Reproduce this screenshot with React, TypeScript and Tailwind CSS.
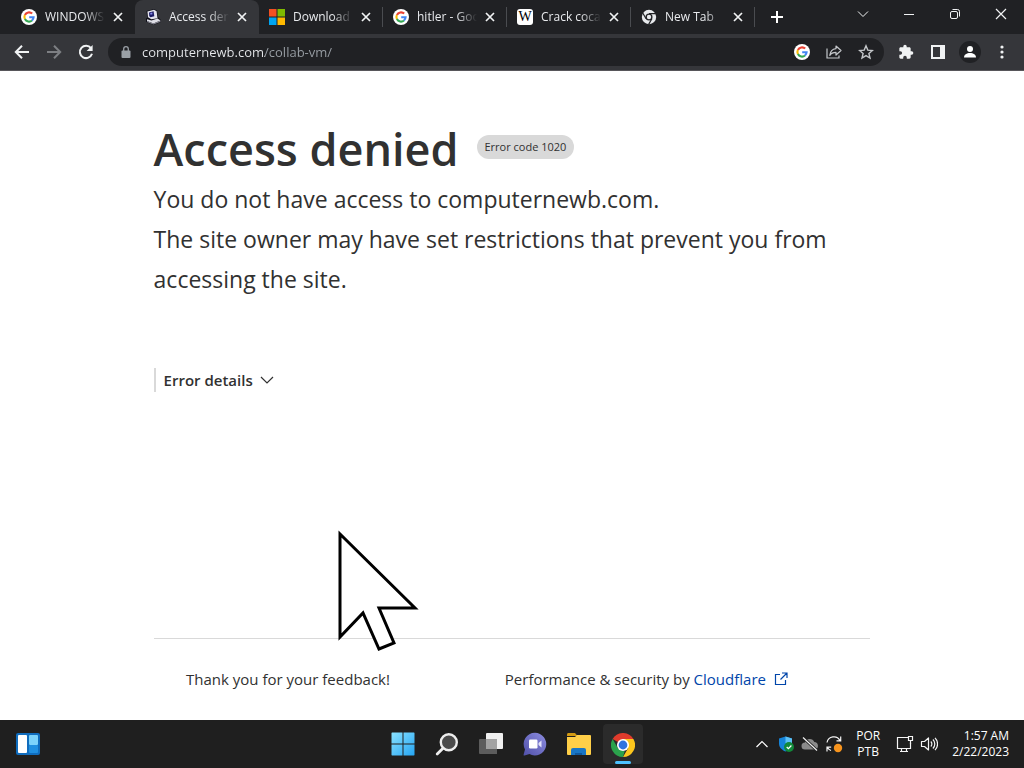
import type { ReactNode } from "react";

const GoogleIcon = () => (
  <svg viewBox="0 0 16 16" className="size-4 shrink-0" aria-hidden="true">
    <circle cx="8" cy="8" r="8" fill="#fff" />
    <g fill="none" strokeWidth="2.1">
      <path d="M11.2 4.6A4.6 4.6 0 0 0 3.9 6" stroke="#ea4335" />
      <path d="M3.9 6a4.6 4.6 0 0 0 0 4.1" stroke="#fbbc05" />
      <path d="M3.9 10.1a4.6 4.6 0 0 0 7.1 1.4" stroke="#34a853" />
      <path d="M11 11.5a4.6 4.6 0 0 0 1.6-3.2H8.2" stroke="#4285f4" />
    </g>
  </svg>
);

const ComputerIcon = () => (
  <svg viewBox="0 0 16 16" className="size-4 shrink-0" aria-hidden="true">
    <path d="M1.5 2L9 0l3 1.6 1 6.4 3 3v2L8.5 16 1 12.800V9.500L2.800 8.500 2 7z" fill="#101018" />
    <path d="M2.400 2.600L9 .8l2.600 1.400.9 7L6.400 10.200 3 8.200z" fill="#e4e4ee" />
    <path d="M4 3.400l4.600-1.100.7 5-3.800.9L4.300 7.300z" fill="#1c1c66" />
    <path d="M5.200 4l2-.5.3 1.800-2 .4z" fill="#8a8aec" />
    <path d="M2 10.200l4.500 1.200L12.500 9.400l3 2-7 3L2 12z" fill="#dedee6" />
    <path d="M2 12l6.500 2.400 7-3v1.300L8.500 15.500 2 13z" fill="#8d8d98" />
  </svg>
);

const MicrosoftIcon = () => (
  <svg viewBox="0 0 16 16" className="size-4 shrink-0" aria-hidden="true">
    <path d="M0 0h7.5v7.5H0z" fill="#f25022" />
    <path d="M8.5 0H16v7.5H8.5z" fill="#7fba00" />
    <path d="M0 8.5h7.5V16H0z" fill="#00a4ef" />
    <path d="M8.5 8.5H16V16H8.5z" fill="#ffb900" />
  </svg>
);

const WikiIcon = () => (
  <span
    aria-hidden="true"
    className="flex size-4 shrink-0 items-center justify-center rounded-[3px] bg-white font-['Liberation_Serif',serif] text-sm leading-none text-black"
  >
    W
  </span>
);

const ChromeMonoIcon = () => (
  <svg viewBox="0 0 16 16" className="size-4 shrink-0" aria-hidden="true">
    <circle cx="8" cy="8" r="7.2" fill="#e8eaed" />
    <circle cx="8" cy="8" r="3.5" fill="#202124" />
    <g stroke="#202124" strokeWidth="1.2">
      <path d="M8 4.6h7M5.1 9.8L1.600 3.800M10.900 9.8L7.500 15.600" />
    </g>
    <circle cx="8" cy="8" r="2.2" fill="#e8eaed" />
  </svg>
);

const ChromeIcon = () => (
  <svg viewBox="0 0 24 24" className="size-6" aria-hidden="true">
    <path d="M12 12L1.6 6a12 12 0 0 1 20.8 0z" fill="#df3b2c" />
    <path d="M12 6h10.4a12 12 0 0 1-10.4 18l5.2-9z" fill="#fcc61d" />
    <path d="M1.6 6l5.2 9 5.2 3h1.700L12 24A12 12 0 0 1 1.6 6z" fill="#2ba24c" />
    <circle cx="12" cy="12" r="6" fill="#fff" />
    <circle cx="12" cy="12" r="4.4" fill="#2f73e0" />
  </svg>
);

type Tab = { title: string; icon: ReactNode; active?: boolean };

const tabs: Tab[] = [
  { title: "WINDOWS", icon: <GoogleIcon /> },
  { title: "Access denied", icon: <ComputerIcon />, active: true },
  { title: "Download W", icon: <MicrosoftIcon /> },
  { title: "hitler - Google", icon: <GoogleIcon /> },
  { title: "Crack cocaine", icon: <WikiIcon /> },
  { title: "New Tab", icon: <ChromeMonoIcon /> },
];

function TabItem({ title, icon, active, divided }: Tab & { divided: boolean }) {
  return (
    <div
      className={
        active
          ? "flex w-[124px] items-center rounded-t-lg bg-[#35363a] pl-2.5"
          : "flex w-[124px] items-center pl-2.5"
      }
    >
      <button type="button" className="flex min-w-0 flex-1 items-center gap-2 text-left">
        {icon}
        <span className="w-[60px] overflow-hidden text-xs whitespace-nowrap text-[#e8eaed] [mask-image:linear-gradient(to_right,#000_66%,transparent)]">
          {title}
        </span>
      </button>
      <button type="button" aria-label="Close tab" className="mr-2 flex size-4 shrink-0 items-center justify-center">
        <svg viewBox="0 0 16 16" className="size-4" stroke="#f1f3f4" strokeWidth="1.7" aria-hidden="true">
          <path d="M4 4l8 8M12 4l-8 8" />
        </svg>
      </button>
      <span className={divided ? "h-5 w-px bg-[#4a4c50]" : "h-5 w-px"} />
    </div>
  );
}

function WindowButton({ label, children }: { label: string; children: ReactNode }) {
  return (
    <button type="button" aria-label={label} className="flex h-7 w-[46px] items-center justify-center">
      <svg viewBox="0 0 12 12" className="size-3" fill="none" stroke="#f1f3f4" strokeWidth="1" aria-hidden="true">
        {children}
      </svg>
    </button>
  );
}

function TabStrip() {
  return (
    <header className="flex h-[34px] bg-[#202124] pl-[11px]">
      <nav aria-label="Tabs" className="flex">
        {tabs.map((tab, i) => (
          <TabItem key={tab.title} {...tab} divided={i > 1} />
        ))}
      </nav>
      <button type="button" aria-label="New tab" className="flex w-11 items-center justify-center">
        <svg viewBox="0 0 12 12" className="size-3" stroke="#fff" strokeWidth="2" aria-hidden="true">
          <path d="M6 0v12M0 6h12" />
        </svg>
      </button>
      <div className="ml-auto flex">
        <WindowButton label="Search tabs">
          <path d="M1 3.5l5 5 5-5" />
        </WindowButton>
        <WindowButton label="Minimize">
          <path d="M1 6.5h10" />
        </WindowButton>
        <WindowButton label="Restore">
          <rect x="1.5" y="3.5" width="7" height="7" rx="1.5" />
          <path d="M3.5 1.5h5a2 2 0 0 1 2 2v5" />
        </WindowButton>
        <WindowButton label="Close">
          <path d="M1 1l10 10M11 1L1 11" strokeWidth="1.2" />
        </WindowButton>
      </div>
    </header>
  );
}

function ToolButton({ label, children }: { label: string; children: ReactNode }) {
  return (
    <button type="button" aria-label={label} className="flex size-8 items-center justify-center">
      {children}
    </button>
  );
}

function Toolbar() {
  return (
    <div className="flex h-[37px] items-center border-b border-[#57565a] bg-[#35363a] px-1.5">
      <ToolButton label="Back">
        <svg viewBox="0 0 16 16" className="size-4" fill="none" stroke="#f1f3f4" strokeWidth="2" aria-hidden="true">
          <path d="M15 8H2M8 1.8L1.8 8 8 14.2" />
        </svg>
      </ToolButton>
      <ToolButton label="Forward">
        <svg viewBox="0 0 16 16" className="size-4" fill="none" stroke="#7d7f83" strokeWidth="2" aria-hidden="true">
          <path d="M1 8h13M8 1.8L14.2 8 8 14.2" />
        </svg>
      </ToolButton>
      <ToolButton label="Reload">
        <svg viewBox="0 0 16 16" className="size-4" fill="none" stroke="#f1f3f4" strokeWidth="2" aria-hidden="true">
          <path d="M13 4.1A6.2 6.2 0 1 0 14 9.8" />
          <path d="M14.6 1v6h-6z" fill="#f1f3f4" stroke="none" />
        </svg>
      </ToolButton>
      <div className="ml-1.5 flex h-7 flex-1 items-center rounded-full bg-[#202124] pr-0.5 pl-3">
        <svg viewBox="0 0 12 12" className="size-3 shrink-0" aria-hidden="true">
          <rect x="1.5" y="4.5" width="9" height="7.5" rx="1" fill="#9aa0a6" />
          <path d="M3.7 5V3a2.3 2.3 0 0 1 4.6 0v2" fill="none" stroke="#9aa0a6" strokeWidth="1.3" />
        </svg>
        <input
          aria-label="Address"
          defaultValue="computernewb.com/collab-vm/"
          className="ml-2.5 min-w-0 flex-1 bg-[linear-gradient(to_right,#e8eaed_123px,#9aa0a6_123px)] bg-clip-text text-[13px] leading-5 text-transparent outline-none"
        />
        <ToolButton label="Search with Google">
          <GoogleIcon />
        </ToolButton>
        <ToolButton label="Share">
          <svg viewBox="0 0 16 16" className="size-4" fill="none" stroke="#c4c7ca" strokeWidth="1.2" aria-hidden="true">
            <path d="M1 4.5V14h12v-2.5" />
            <path d="M10 2l5 4.5-5 4.5V8.4C7 8.4 5 9.4 3.8 11.4 4.2 7.6 6.4 5 10 4.6z" strokeLinejoin="round" />
          </svg>
        </ToolButton>
        <ToolButton label="Bookmark">
          <svg viewBox="0 0 16 16" className="size-4" fill="none" stroke="#c4c7ca" strokeWidth="1.4" aria-hidden="true">
            <path d="M8 1.8l1.8 4.3 4.6.4-3.5 3 1.1 4.5L8 11.6 4 14l1.1-4.5-3.5-3 4.6-.4z" />
          </svg>
        </ToolButton>
      </div>
      <div className="ml-1.5 flex">
        <ToolButton label="Extensions">
          <svg viewBox="0 0 24 24" className="size-4" fill="#f1f3f4" aria-hidden="true">
            <path d="M20.5 11H19V7c0-1.1-.9-2-2-2h-4V3.5a2.5 2.5 0 0 0-5 0V5H4c-1.1 0-2 .9-2 2v3.8h1.5a2.7 2.7 0 0 1 0 5.4H2V20c0 1.1.9 2 2 2h3.8v-1.5a2.7 2.7 0 0 1 5.4 0V22H17c1.1 0 2-.9 2-2v-4h1.5a2.5 2.5 0 0 0 0-5z" />
          </svg>
        </ToolButton>
        <ToolButton label="Side panel">
          <svg viewBox="0 0 16 16" className="size-4" aria-hidden="true">
            <path d="M1 1h14v14H1zM3 3v10h7V3z" fill="#f1f3f4" fillRule="evenodd" />
          </svg>
        </ToolButton>
        <ToolButton label="Profile">
          <svg viewBox="0 0 22 22" className="size-[22px]" aria-hidden="true">
            <circle cx="11" cy="11" r="11" fill="#202124" />
            <circle cx="11" cy="8" r="3" fill="#fff" />
            <path d="M5 16.5c0-3 2.7-4.5 6-4.5s6 1.5 6 4.5z" fill="#fff" />
          </svg>
        </ToolButton>
        <ToolButton label="Menu">
          <svg viewBox="0 0 16 16" className="size-4" fill="#f1f3f4" aria-hidden="true">
            <circle cx="8" cy="3" r="1.6" />
            <circle cx="8" cy="8" r="1.6" />
            <circle cx="8" cy="13" r="1.6" />
          </svg>
        </ToolButton>
      </div>
    </div>
  );
}

function Page() {
  return (
    <main className="relative flex flex-1 flex-col bg-white text-[#313131]">
      <div className="mx-auto flex w-[70%] flex-1 flex-col pt-12">
        <div className="flex items-center gap-[18px]">
          <h1 className="text-[45px] leading-[60px] font-semibold">Access denied</h1>
          <span className="mb-1 rounded-full bg-[#d9d9d9] px-2 text-[11px] leading-6">Error code 1020</span>
        </div>
        <div className="text-[23px] leading-10">
          <p>You do not have access to computernewb.com.</p>
          <p>The site owner may have set restrictions that prevent you from accessing the site.</p>
        </div>
        <div className="mt-[69px] flex">
          <button
            type="button"
            aria-expanded="false"
            className="flex items-center gap-1.5 border-l-2 border-[#d9d9d9] pl-2 text-[15px] leading-6 font-semibold"
          >
            Error details
            <svg viewBox="0 0 16 16" className="size-4" fill="none" stroke="#313131" strokeWidth="1.2" aria-hidden="true">
              <path d="M2 5l6 6 6-6" />
            </svg>
          </button>
        </div>
        <footer className="mt-auto grid grid-cols-[3fr_5fr] border-t border-[#d9d9d9] py-7 text-center text-[15px] leading-[25px]">
          <p className="whitespace-nowrap">Thank you for your feedback!</p>
          <p className="whitespace-nowrap">
            Performance &amp; security by{" "}
            <a href="#cloudflare" className="text-[#0045aa]">
              Cloudflare
              <svg
                viewBox="0 0 14 14"
                className="ml-2 inline size-3.5 align-[-1px]"
                fill="none"
                stroke="currentColor"
                strokeWidth="1.2"
                aria-hidden="true"
              >
                <path d="M6 2.5H1.5v10h10V8M8 1h5v5M13 1L6.500 7.500" />
              </svg>
            </a>
          </p>
        </footer>
      </div>
      <svg viewBox="0 0 84 124" className="absolute top-[457px] left-[336px] h-[124px] w-[84px]" aria-hidden="true">
        <path
          d="M4 6v103l23-24 16 36 15-6-15-35h36z"
          fill="#fff"
          stroke="#000"
          strokeWidth="3"
        />
      </svg>
    </main>
  );
}

function TaskButton({ label, active, children }: { label: string; active?: boolean; children: ReactNode }) {
  return (
    <button
      type="button"
      aria-label={label}
      className={
        active
          ? "flex size-10 flex-col items-center justify-end gap-1 rounded bg-[#2b2b2b]"
          : "flex size-10 items-center justify-center rounded"
      }
    >
      {children}
      {active && <span className="h-[3px] w-4 rounded-full bg-[#4cc2ff]" />}
    </button>
  );
}

function Taskbar() {
  return (
    <footer className="grid h-12 grid-cols-[1fr_auto_1fr] items-center bg-[#1f1f1f] text-white">
      <div className="pl-2">
        <TaskButton label="Widgets">
          <svg viewBox="0 0 24 22" className="h-[22px] w-6" aria-hidden="true">
            <rect width="24" height="22" rx="2" fill="#0f6cbd" />
            <rect x="2" y="2" width="9" height="18" rx="1" fill="#fff" />
            <rect x="13" y="2" width="9" height="10" rx="1" fill="#7cd3fb" />
            <rect x="13" y="12" width="9" height="8" rx="1" fill="#1f8fe0" />
          </svg>
        </TaskButton>
      </div>
      <div className="flex gap-1 pl-px">
        <TaskButton label="Start">
          <svg viewBox="0 0 24 24" className="size-6" aria-hidden="true">
            <defs>
              <linearGradient id="start" x2="1" y2="1">
                <stop stopColor="#8ae2ff" />
                <stop offset="1" stopColor="#25a5f3" />
              </linearGradient>
            </defs>
            <path
              d="M1 .5h10.500v11H.5V1zM12.500.5H23l.5.5v10.500h-11zM.5 12.500h11v11H1l-.5-.5zM12.500 12.500h11V23l-.5.5H12.500z"
              fill="url(#start)"
            />
          </svg>
        </TaskButton>
        <TaskButton label="Search">
          <svg viewBox="0 0 24 24" className="size-6" fill="none" aria-hidden="true">
            <circle cx="13.800" cy="10.200" r="8" fill="#4b4b4b" stroke="#eee" strokeWidth="2.400" />
            <path d="M8 16.200L2.200 22" stroke="#eee" strokeWidth="2.800" strokeLinecap="round" />
          </svg>
        </TaskButton>
        <TaskButton label="Task view">
          <svg viewBox="0 0 26 24" className="h-6 w-[26px]" aria-hidden="true">
            <rect x="8" y="1" width="17" height="16" rx="1" fill="#f0f0f0" />
            <path d="M2 7h17v15H2a1 1 0 0 1-1-1V8a1 1 0 0 1 1-1z" fill="#5c5c5c" />
            <path d="M8 7h11v10H8z" fill="#a2a2a2" />
          </svg>
        </TaskButton>
        <TaskButton label="Chat">
          <svg viewBox="0 0 24 24" className="size-6" aria-hidden="true">
            <defs>
              <linearGradient id="chat" x1="1" x2="0" y2="1">
                <stop stopColor="#8d8de0" />
                <stop offset="1" stopColor="#5050a8" />
              </linearGradient>
            </defs>
            <path
              d="M12 .8A11.300 11.300 0 1 1 6.500 22L1.500 23.500c-1 .2-1-.5-.8-1.200L2 17.500A11.300 11.300 0 0 1 12 .8z"
              fill="url(#chat)"
            />
            <rect x="6" y="7.500" width="8.500" height="9" rx="1.200" fill="#fff" />
            <path d="M15.500 11l3-2.500v7l-3-2.500z" fill="#e3e3fa" />
          </svg>
        </TaskButton>
        <TaskButton label="File Explorer">
          <svg viewBox="0 0 26 24" className="h-6 w-[26px]" aria-hidden="true">
            <path d="M1 2.500C1 1.700 1.500 1 2.500 1H9l2.500 3H1z" fill="#d39a13" />
            <path d="M1 5h8l2-2h13a1 1 0 0 1 1 1v18a1 1 0 0 1-1 1H2a1 1 0 0 1-1-1z" fill="#ffcf48" />
            <path d="M5 23v-5a2 2 0 0 1 2-2h11a2 2 0 0 1 2 2v5z" fill="#1976c5" />
            <path d="M9 23v-2h7v2z" fill="#10589c" />
          </svg>
        </TaskButton>
        <TaskButton label="Google Chrome" active>
          <ChromeIcon />
        </TaskButton>
      </div>
      <div className="flex items-center justify-end pr-[15px] text-right text-xs leading-4">
        <button type="button" aria-label="Show hidden icons" className="flex w-6 justify-center">
          <svg viewBox="0 0 12 12" className="size-3" fill="none" stroke="#fff" strokeWidth="1.2" aria-hidden="true">
            <path d="M.5 9L6 3.5 11.5 9" />
          </svg>
        </button>
        <button type="button" aria-label="Windows Security" className="flex w-6 justify-center">
          <svg viewBox="0 0 16 16" className="size-4" aria-hidden="true">
            <path d="M7.500.5L14 2.500v5c0 4-3 6.500-6.500 8C4 14 1 11.500 1 7.500v-5z" fill="#1583d8" />
            <path d="M7.500.5L14 2.500v5H7.500z" fill="#5cc0f5" />
            <circle cx="11" cy="11" r="5" fill="#11893a" />
            <path d="M8.700 11l1.700 1.700 3-3.200" fill="none" stroke="#fff" strokeWidth="1.2" />
          </svg>
        </button>
        <button type="button" aria-label="OneDrive" className="flex w-6 justify-center">
          <svg viewBox="0 0 18 16" className="h-4 w-[18px]" aria-hidden="true">
            <path d="M4 13.500A3.500 3.500 0 0 1 4 6.500 5 5 0 0 1 13.300 6 3.800 3.800 0 0 1 14 13.500z" fill="#8a8a8a" />
            <path d="M2 1.500l14 13" stroke="#1f1f1f" strokeWidth="3" />
            <path d="M2 1.500l14 13" stroke="#f0f0f0" strokeWidth="1.2" />
          </svg>
        </button>
        <button type="button" aria-label="Updates" className="flex w-6 justify-center">
          <svg viewBox="0 0 18 18" className="size-[18px]" fill="none" stroke="#f5f5f5" strokeWidth="1.2" aria-hidden="true">
            <path d="M2 7.500A7 7 0 0 1 15 5.500M15.700 1.500v4.300h-4.200" />
            <path d="M2 16.500v-4.300h4.200M2.500 12.500A7 7 0 0 0 6 15.500" />
            <circle cx="13" cy="13" r="4.200" fill="#f7941d" stroke="none" />
          </svg>
        </button>
        <button type="button" className="ml-2 w-7 text-center">
          <span className="block">POR</span>
          <span className="block">PTB</span>
        </button>
        <button type="button" aria-label="Network and volume" className="ml-3.5 flex gap-1.5">
          <svg viewBox="0 0 18 18" className="size-[18px]" fill="none" stroke="#f5f5f5" strokeWidth="1.2" aria-hidden="true">
            <path d="M12 2.500H1.500v11h13V8M5.500 13.500v3M10.500 13.500v3M4 16.500h8" />
            <path d="M12.500 1.500h4v4h-4zM14.500 5.500V9" />
          </svg>
          <svg viewBox="0 0 18 18" className="size-[18px]" fill="none" stroke="#f5f5f5" strokeWidth="1.2" aria-hidden="true">
            <path d="M1.500 6.500h3l4-3.500v12l-4-3.500h-3z" strokeLinejoin="round" />
            <path d="M10.800 6.500a3.500 3.500 0 0 1 0 5M12.900 4.500a6.300 6.300 0 0 1 0 9M15 2.800a8.800 8.800 0 0 1 0 12.400" />
          </svg>
        </button>
        <button type="button" className="ml-3.5 text-right whitespace-nowrap">
          <span className="block">1:57 AM</span>
          <span className="block">2/22/2023</span>
        </button>
      </div>
    </footer>
  );
}

export default function App() {
  return (
    <div className="flex min-h-screen flex-col font-['Open_Sans','Noto_Sans',sans-serif]">
      <TabStrip />
      <Toolbar />
      <Page />
      <Taskbar />
    </div>
  );
}
